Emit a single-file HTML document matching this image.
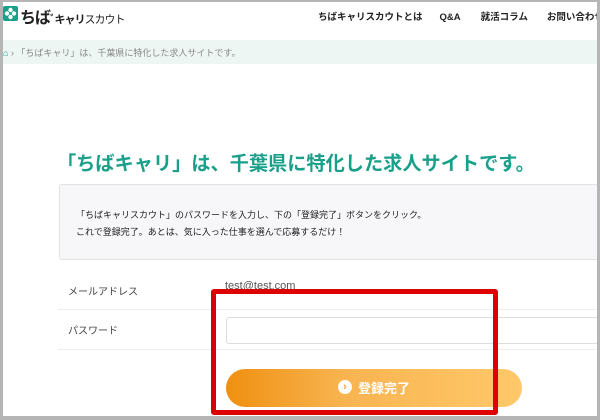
<html><head><style>
body{margin:0;width:600px;height:420px;background:#b5b5b5;overflow:hidden;font-family:"Liberation Sans","Noto Sans CJK JP",sans-serif;position:relative}
#pg{position:absolute;left:3px;top:2px;width:594px;height:414px;background:#fff;overflow:hidden}
.a{position:absolute;white-space:nowrap}
</style></head><body><div id="pg">
<div class="a" style="left:0;top:4px;width:15px;height:15px;background:#1aa08a;border-radius:2px"><svg width="15" height="15"><circle cx="7.5" cy="4" r="2.2" fill="#fff"/><circle cx="7.5" cy="11" r="2.2" fill="#fff"/><circle cx="4" cy="7.5" r="2.2" fill="#fff"/><circle cx="11" cy="7.5" r="2.2" fill="#fff"/></svg></div>
<div class="a" style="left:17px;top:2px;font-size:16px;font-weight:bold;color:#222;letter-spacing:-1px">ちば<span style="font-size:11px">ﾞキャリ</span><span style="font-size:11px;font-weight:normal">スカウト</span></div>
<div class="a" style="left:315px;top:7px;font-size:9.5px;font-weight:bold;color:#222">ちばキャリスカウトとは<span style="margin-left:17px">Q&amp;A</span><span style="margin-left:20px">就活コラム</span><span style="margin-left:19px">お問い合わせ</span></div>
<div class="a" style="left:0;top:38px;width:594px;height:24px;background:#eef6f4"></div>
<div class="a" style="left:0;top:44px;font-size:9px;color:#888"><span style="color:#1aa08a;font-weight:bold">⌂</span> › 「ちばキャリ」は、千葉県に特化した求人サイトです。</div>
<div class="a" style="left:54px;top:146px;font-size:19.2px;font-weight:bold;color:#1aa08a">「ちばキャリ」は、千葉県に特化した求人サイトです。</div>
<div class="a" style="left:56px;top:182px;width:550px;height:74px;background:#f7f7f9;border:1px solid #e2e2e2;border-radius:3px"></div>
<div class="a" style="left:73px;top:205px;font-size:9px;color:#222;line-height:17px">「ちばキャリスカウト」のパスワードを入力し、下の「登録完了」ボタンをクリック。<br>これで登録完了。あとは、気に入った仕事を選んで応募するだけ！</div>
<div class="a" style="left:65px;top:281px;font-size:10px;color:#444">メールアドレス</div>
<div class="a" style="left:222px;top:278px;font-size:11px;color:#555">test@test.com</div>
<div class="a" style="left:55px;top:307px;width:550px;height:1px;background:#eee"></div>
<div class="a" style="left:65px;top:320px;font-size:10px;color:#444">パスワード</div>
<div class="a" style="left:223px;top:315px;width:380px;height:25px;border:1px solid #ddd;border-radius:3px"></div>
<div class="a" style="left:55px;top:347px;width:550px;height:1px;background:#eee"></div>
<div class="a" style="left:223px;top:367px;width:296px;height:38px;border-radius:19px;background:linear-gradient(90deg,#ef9010,#f8b450 40%,#ffc86a)"></div>
<div class="a" style="left:335px;top:378px;width:14px;height:14px;border-radius:50%;background:#fff;color:#f4a030;font-size:11px;line-height:14px;text-align:center;font-weight:bold">›</div>
<div class="a" style="left:355px;top:376px;font-size:13px;font-weight:bold;color:#fff">登録完了</div>
<div class="a" style="left:208px;top:287px;width:277px;height:116px;border:5px solid #dd0000;border-radius:3px"></div>
</div></body></html>
